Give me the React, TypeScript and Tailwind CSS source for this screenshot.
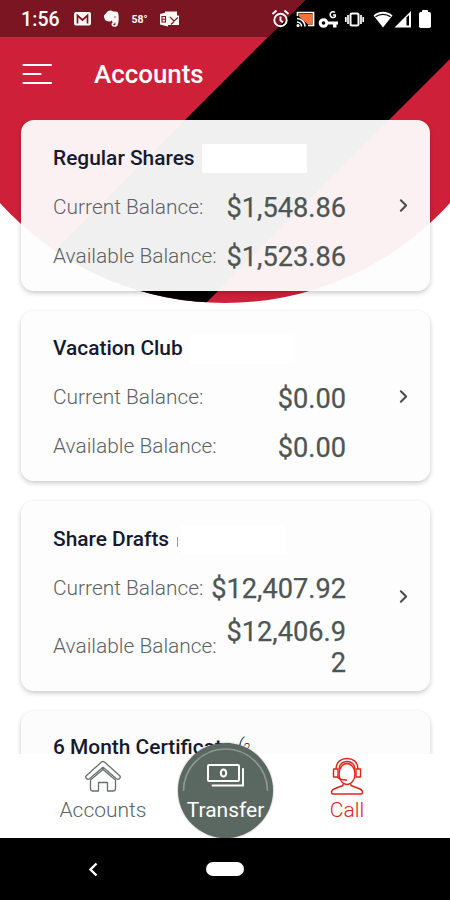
import { ChevronRight } from 'lucide-react';

// Types
type Account = {
  id: number;
  name: string;
  current: string;
  available: string;
};

const accounts: Account[] = [
  { id: 1, name: "Regular Shares", current: "$1,548.86", available: "$1,523.86" },
  { id: 2, name: "Vacation Club", current: "$0.00", available: "$0.00" },
  { id: 3, name: "Share Drafts", current: "$12,407.92", available: "$12,406.92" },
];

function Backdrop() {
  return (
    <svg className="absolute inset-x-0 top-0" width="450" height="310" viewBox="0 0 450 310">
      <defs>
        <clipPath id="dome">
          <circle cx="225" cy="0" r="303" />
        </clipPath>
      </defs>
      <g clipPath="url(#dome)">
        <rect width="450" height="310" fill="#cf2039" />
        <path d="M305 0H509L199 310H-5Z" fill="#000" />
        <path d="M0 0H305L268 37H0Z" fill="#7c1522" />
      </g>
    </svg>
  );
}

function StatusBar() {
  return (
    <div className="relative h-[37px] flex items-center justify-between pl-[21px] pr-[18px] text-white">
      <div className="flex items-center">
        <span className="w-[81px] text-[19.5px] leading-none font-medium tracking-[0.1px] pt-[2px]">1:56</span>
        <svg className="-ml-[29px]" width="108" height="20" viewBox="0 0 108 20">
          {/* mail */}
          <rect x="1" y="3" width="17" height="13.500" rx="2" fill="#fff8f4" />
          <path d="M4.500 14.500V6.500l5 4.500 5-4.500v8" fill="none" stroke="#7c1522" strokeWidth="1.700" />
          {/* evernote */}
          <path d="M31 6.500l4-4.500c2-1 4-.5 5 .5 3 0 5 0 5.300 2 .8 4 .5 9-.8 12-1.500 2-6 1.500-6-1 0-2 1.500-2.500 3-2.200v1.500c-1 0-1.300.4-1.200 1 .3.800 2 .6 2.200-.5.2-1.500-.5-2-2-2-1.500-.2-1.500-1-1.700-2-.5 2-6 1.500-7-1-.8-2-1-3-.8-3.800Z" fill="#fff8f4" />
          <circle cx="42" cy="8" r=".7" fill="#7c1522" />
          <text x="58.500" y="13.500" fontSize="10.500" fontWeight="700" fill="#fff8f4">58°</text>
          {/* outlook */}
          <path d="M92 2.500h12v4h2v9.500H92Z" fill="#fff8f4" />
          <path d="M87 5l8-2v14.500l-8-2Z" fill="#fff8f4" />
          <path d="M89 7.500h3.500v5.500h-3.500ZM89 10.200h3.500M97 8l4 4 4-3.500M98 15.500l3-3" fill="none" stroke="#7c1522" strokeWidth="1.100" />
        </svg>
      </div>
      <svg width="162" height="22" viewBox="0 0 162 22">
        {/* alarm */}
        <g fill="none" stroke="#fff" strokeWidth="1.900">
          <circle cx="10.500" cy="12" r="6.200" />
          <path d="M10.500 8.500v4l2.500 1.800M2.500 6l4-3.500M18.500 6l-4-3.500" />
        </g>
        {/* cast */}
        <path d="M29 6h13.500v10.500H38l-9-8Z" fill="#f4703c" />
        <g fill="none" stroke="#fff" strokeWidth="1.700">
          <path d="M27.500 8V4.500h16v13H38" />
          <path d="M27 10.500a8 8 0 0 1 8 8M27 14a4.500 4.500 0 0 1 4.500 4.500" />
        </g>
        <circle cx="28" cy="17.500" r="1.500" fill="#fff" />
        {/* vpn key */}
        <circle cx="53.500" cy="15" r="3.300" fill="none" stroke="#fff" strokeWidth="3" />
        <path d="M57.500 13.500H68v3h-1.500v3h-3.500v-3H57.500Z" fill="#fff" />
        <path d="M65 4.500a2.900 2.900 0 1 0 .3 4V7H63" fill="none" stroke="#fff" strokeWidth="1.500" />
        {/* vibrate */}
        <rect x="80.500" y="5.500" width="8" height="12" rx="1.500" fill="none" stroke="#fff" strokeWidth="2" />
        <path d="M78 7v9M91 7v9M75.800 9v5M93.200 9v5" stroke="#fff" strokeWidth="1.700" />
        {/* wifi */}
        <path d="M103.500 7.500c5-5 14-5 19 0L113 19.500Z" fill="#fff" />
        <path d="M105.500 8.800c4.500-3.300 10.500-3.300 15 0" fill="none" stroke="#000" strokeWidth="1.300" />
        {/* signal */}
        <path d="M124.500 19.500L141 3v16.500Z" fill="#fff" />
        <path d="M136.500 9.500v8h2.500V7Z" fill="#000" />
        {/* battery */}
        <rect x="149" y="4" width="12" height="16" rx="1.800" fill="#fff" />
        <rect x="152" y="2" width="6" height="3" rx=".8" fill="#fff" />
      </svg>
    </div>
  );
}

function AccountCard({ account }: { account: Account }) {
  return (
    <div className="relative shrink-0 flex items-center rounded-[13px] bg-[#fdfdfd]/95 pl-8 pr-[16px] pt-[14px] pb-[9.5px] shadow-[0_2px_5px_rgba(0,0,0,0.22)]">
      <div className="w-[293px]">
        <div className="h-[49px] flex items-center text-[20.9px] font-medium text-[#161a2e]">
          {account.name}
          {account.id === 1 && <span className="ml-[7px] w-[105px] h-[29px] bg-white" />}
          {account.id === 2 && <span className="ml-[7px] w-[105px] h-[29px] bg-white" />}
          {account.id === 3 && (
            <>
              <span className="ml-2 w-px h-[10px] mt-1 bg-[#9a9a9f]" />
              <span className="ml-[3px] w-[105px] h-[29px] bg-white" />
            </>
          )}
        </div>
        <BalanceRow label="Current Balance:" amount={account.current} />
        <BalanceRow label="Available Balance:" amount={account.available} />
      </div>
      <ChevronRight className="ml-auto mb-1" size={21} strokeWidth={2.4} color="#4a4f4d" />
    </div>
  );
}

function BalanceRow({ label, amount }: { label: string; amount: string }) {
  return (
    <div className="min-h-[49px] py-[3px] flex items-center justify-between">
      <span className="whitespace-nowrap text-[20.9px] font-light text-[#5c6265]">{label}</span>
      <span className="relative top-px flex-1 min-w-0 ml-[5px] text-right break-all text-[27.2px] leading-[31px] text-[#4d5652] [-webkit-text-stroke:0.25px_#4d5652]">{amount}</span>
    </div>
  );
}

function TabBar() {
  return (
    <div className="relative h-[84px] flex bg-white text-[21px]">
      <div className="w-[206px] flex flex-col items-center pt-[6px] font-light text-[#5b6361]">
        <svg width="38" height="34" viewBox="0 0 38 34" fill="none" stroke="#66706c" strokeWidth="1.300" strokeLinejoin="round">
          <path d="M17.500 2q1.500-1 3 0L35.500 15.500c2 2-.8 5-3 3.300L19 7.300 5.500 18.800c-2.200 1.700-5-1.300-3-3.300Z" />
          <path d="M6.500 20v8.500q0 2.500 2.500 2.500h5.500v-8.500h9V31H29q2.500 0 2.500-2.500V20L19 9.500Z" />
        </svg>
        <span className="leading-6 mt-[4px]">Accounts</span>
      </div>
      <div className="absolute left-[178px] -top-[11px] size-[95px] rounded-full bg-[#5b6861] text-white flex flex-col items-center pt-[20px] shadow-[0_0_2px_rgba(0,0,0,0.4)]">
        <svg className="absolute inset-0" width="95" height="95" viewBox="0 0 95 95">
          <path d="M5.500 48a42 42 0 0 1 84 0" fill="none" stroke="#8d9791" strokeWidth="1.700" />
        </svg>
        <svg width="40" height="27" viewBox="0 0 40 27" fill="none" stroke="#fff" strokeWidth="2" strokeLinecap="round">
          <rect x="2" y="2" width="31" height="16" rx="1" />
          <ellipse cx="17.500" cy="10" rx="2.700" ry="3.600" />
          <path d="M6.500 22.500H37V6" />
        </svg>
        <span className="relative leading-6 mt-[8px]">Transfer</span>
      </div>
      <div className="ml-auto mr-[53px] w-[100px] flex flex-col items-center pt-[3px] font-light text-[#e2231a]">
        <svg width="36" height="40" viewBox="0 0 36 40" fill="none" stroke="#e2231a" strokeWidth="1.400" strokeLinejoin="round">
          <path d="M7 12C7 5 12 1.500 18 1.500S29 5 29 12M10 12c0-5 4-7.500 8-7.500s8 2.500 8 7.500" />
          <ellipse cx="18" cy="17" rx="8" ry="10.500" />
          <path d="M9 12H4.500v8H9ZM27 12h4.500v8H27Z" />
          <path d="M8 20q4 3.500 10 3" />
          <path d="M14 27v1.500L5 32q-2.500 1-2.500 3.500 0 1.500 1.500 1.500h28q1.500 0 1.500-1.500Q33.500 33 31 32l-9-3.500V27" />
        </svg>
        <span className="leading-6 mt-px">Call</span>
      </div>
    </div>
  );
}

export default function App() {
  return (
    <div className="relative w-[450px] h-[900px] overflow-hidden flex flex-col bg-white font-[Roboto,sans-serif]">
      <Backdrop />
      <StatusBar />

      {/* Header */}
      <header className="relative h-[83px] shrink-0 flex items-center pl-[22px] pb-[8px] text-white">
        <svg width="31" height="24" viewBox="0 0 31 24" stroke="#fff" strokeWidth="2.200" strokeLinecap="round">
          <path d="M1.500 2h27.500M1.500 11h17M1.500 20h27.500" />
        </svg>
        <h1 className="ml-[41px] text-[25.9px] font-medium">Accounts</h1>
      </header>

      {/* Accounts */}
      <main className="relative h-[634px] shrink-0 overflow-hidden pl-[21px] pr-[20px] flex flex-col gap-5">
        {accounts.map((account) => (
          <AccountCard key={account.id} account={account} />
        ))}
        <div className="h-[170px] shrink-0 rounded-[13px] bg-[#fcfcfc] pl-8 pt-[13px] shadow-[0_2px_5px_rgba(0,0,0,0.22)]">
          <div className="h-[49px] flex items-center text-[20.9px] font-medium text-[#161a2e]">
            6 Month Certificate
            <span className="ml-[5px] mb-2 text-[18px] font-light italic">(</span>
            <span className="text-[12px] font-light">2</span>
          </div>
        </div>
      </main>

      <TabBar />

      {/* System navigation */}
      <div className="relative h-[62px] shrink-0 bg-black">
        <svg className="absolute left-[87px] top-[24px]" width="12" height="15" viewBox="0 0 12 15" fill="none" stroke="#fff" strokeWidth="2.400">
          <path d="M9.500 1.500l-6 6 6 6" />
        </svg>
        <span className="absolute left-[206px] top-[24px] w-[38px] h-[14px] rounded-full bg-white" />
      </div>
    </div>
  );
}
